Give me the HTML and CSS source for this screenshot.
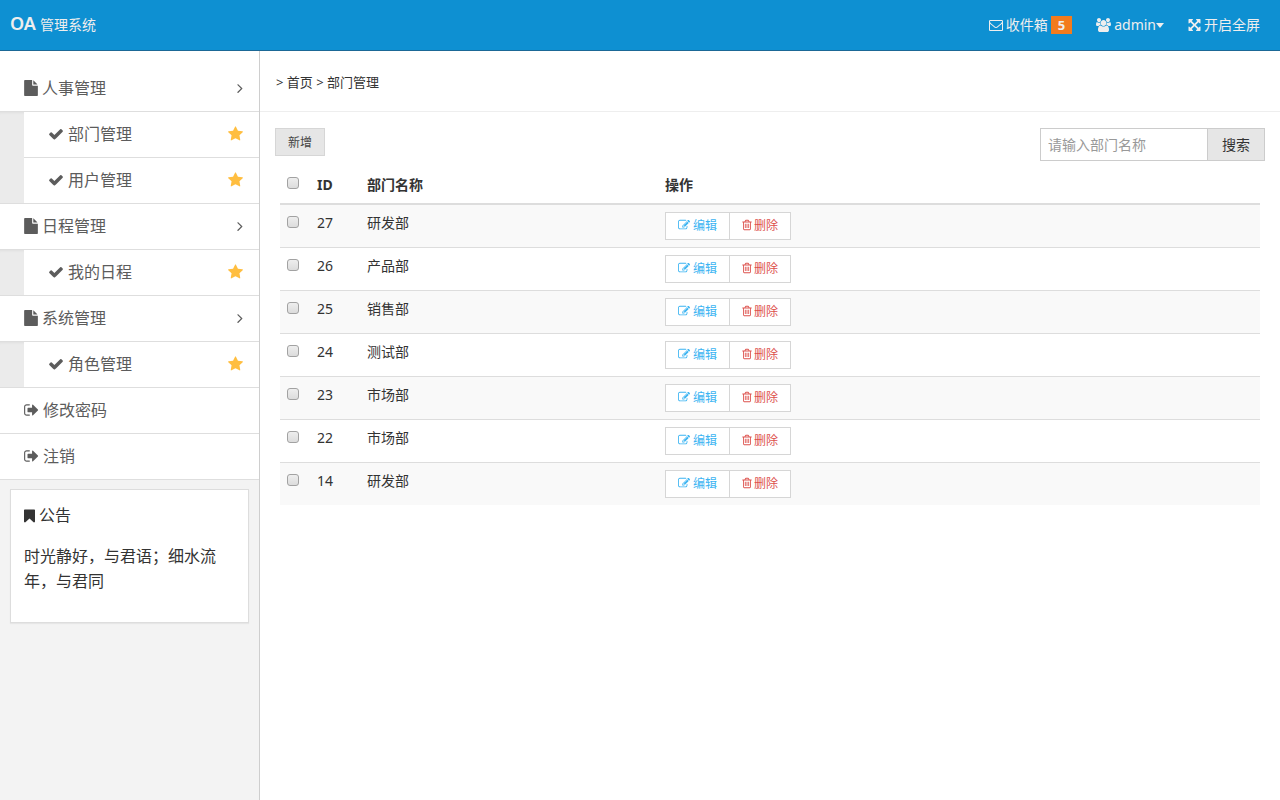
FILE: index.html
```html
<!DOCTYPE html>
<html lang="zh-CN">
<head>
<meta charset="utf-8">
<meta name="viewport" content="width=device-width, initial-scale=1">
<title>OA 管理系统</title>
<link rel="stylesheet" href="styles.css">
</head>
<body>
<svg class="sprite" aria-hidden="true">
  <symbol id="file" viewBox="128 0 1536 1792"><path d="M1152 512v-472q22 14 36 28l408 408q14 14 28 36h-472zm-128 32q0 40 28 68t68 28h544v1056q0 40-28 68t-68 28h-1344q-40 0-68-28t-28-68v-1600q0-40 28-68t68-28h800v544z"/></symbol>
  <symbol id="check" viewBox="0 0 1792 1792"><path d="M1671 566q0 40-28 68l-724 724-136 136q-28 28-68 28t-68-28l-136-136-362-362q-28-28-28-68t28-68l136-136q28-28 68-28t68 28l294 295 656-657q28-28 68-28t68 28l136 136q28 28 28 68z"/></symbol>
  <symbol id="star" viewBox="64 0 1664 1792"><path d="M1728 647q0 22-26 48l-363 354 86 500q1 7 1 20 0 21-10.500 35.500t-30.500 14.500q-19 0-40-12l-449-236-449 236q-22 12-40 12-21 0-31.500-14.500t-10.500-35.500q0-6 2-20l86-500-364-354q-25-27-25-48 0-37 56-46l502-73 225-455q19-41 49-41t49 41l225 455 502 73q56 9 56 46z"/></symbol>
  <symbol id="angle" viewBox="576 0 640 1792"><path d="M1171 960q0 13-10 23l-466 466q-10 10-23 10t-23-10l-50-50q-10-10-10-23t10-23l393-393-393-393q-10-10-10-23t10-23l50-50q10-10 23-10t23 10l466 466q10 10 10 23z"/></symbol>
  <symbol id="signout" viewBox="64 0 1664 1792"><path d="M704 1440q0 4 1 20t.5 26.500-3 23.500-10 19.500-20.500 6.500h-320q-119 0-203.500-84.500t-84.500-203.500v-704q0-119 84.500-203.500t203.500-84.500h320q13 0 22.500 9.500t9.500 22.500q0 4 1 20t.5 26.500-3 23.500-10 19.500-20.500 6.500h-320q-66 0-113 47t-47 113v704q0 66 47 113t113 47h312l11.500 1 11.500 3 8 5.500 7 9 2 13.500zm928-544q0 26-19 45l-544 544q-19 19-45 19t-45-19-19-45v-288h-448q-26 0-45-19t-19-45v-384q0-26 19-45t45-19h448v-288q0-26 19-45t45-19 45 19l544 544q19 19 19 45z"/></symbol>
  <symbol id="bookmark" viewBox="256 0 1280 1792"><path d="M1420 128q23 0 44 9 33 13 52.500 41t19.500 62v1289q0 34-19.500 62t-52.500 41q-19 8-44 8-48 0-83-32l-441-424-441 424q-36 33-83 33-23 0-44-9-33-13-52.500-41t-19.500-62v-1289q0-34 19.500-62t52.500-41q21-9 44-9h1048z"/></symbol>
  <symbol id="envelope" viewBox="0 0 1792 1792"><path d="M1664 1504v-768q-32 36-69 66-268 206-426 338-51 43-83 67t-86.500 48.500-102.500 24.500h-2q-48 0-102.500-24.500t-86.500-48.500-83-67q-158-132-426-338-37-30-69-66v768q0 13 9.500 22.500t22.500 9.500h1472q13 0 22.500-9.500t9.500-22.500zm0-1051v-24.500l-.5-13-3-12.500-5.500-9-9-7.500-14-2.500h-1472q-13 0-22.500 9.500t-9.500 22.500q0 168 147 284 193 152 401 317 6 5 35 29.500t46 37.500 44.500 31.500 50.500 27.500 43 9h2q20 0 43-9t50.500-27.500 44.500-31.500 46-37.500 35-29.500q208-165 401-317 54-43 100.500-115.500t46.500-131.500zm128-37v1088q0 66-47 113t-113 47h-1472q-66 0-113-47t-47-113v-1088q0-66 47-113t113-47h1472q66 0 113 47t47 113z"/></symbol>
  <symbol id="users" viewBox="-64 0 1920 1792"><path d="M529 896q-162 5-265 128h-134q-82 0-138-40.500t-56-118.500q0-353 124-353 6 0 43.500 21t97.500 42.500 119 21.500q67 0 133-23-5 37-5 66 0 139 81 256zm1071 637q0 120-73 189.500t-194 69.500h-874q-121 0-194-69.500t-73-189.500q0-53 3.500-103.500t14-109 26.500-108.500 43-97.500 62-81 85.500-53.500 111.500-20q10 0 43 21.500t73 48 107 48 135 21.500 135-21.500 107-48 73-48 43-21.500q61 0 111.500 20t85.500 53.500 62 81 43 97.500 26.500 108.500 14 109 3.500 103.500zm-1024-1277q0 106-75 181t-181 75-181-75-75-181 75-181 181-75 181 75 75 181zm704 384q0 159-112.500 271.500t-271.500 112.500-271.500-112.500-112.500-271.500 112.500-271.500 271.500-112.500 271.500 112.500 112.500 271.500zm576 225q0 78-56 118.500t-138 40.500h-134q-103-123-265-128 81-117 81-256 0-29-5-66 66 23 133 23 59 0 119-21.500t97.500-42.500 43.500-21q124 0 124 353zm-128-609q0 106-75 181t-181 75-181-75-75-181 75-181 181-75 181 75 75 181z"/></symbol>
  <symbol id="arrows" viewBox="128 0 1536 1792"><path d="M1411 541l-355 355 355 355 144-144q29-31 70-14 39 17 39 59v448q0 26-19 45t-45 19h-448q-42 0-59-40-17-39 14-69l144-144-355-355-355 355 144 144q31 30 14 69-17 40-59 40h-448q-26 0-45-19t-19-45v-448q0-42 40-59 39-17 69 14l144 144 355-355-355-355-144 144q-19 19-45 19-12 0-24-5-40-17-40-59v-448q0-26 19-45t45-19h448q42 0 59 40 17 39-14 69l-144 144 355 355 355-355-144-144q-31-30-14-69 17-40 59-40h448q26 0 45 19t19 45v448q0 42-39 59-13 5-25 5-26 0-45-19z"/></symbol>
  <symbol id="edit" viewBox="0 0 1792 1792"><path d="M888 1184l116-116-152-152-116 116v56h96v96h56zm440-720q-16-16-33 1l-350 350q-17 17-1 33t33-1l350-350q17-17 1-33zm80 594v190q0 119-84.500 203.500t-203.500 84.500h-832q-119 0-203.500-84.500t-84.500-203.500v-832q0-119 84.500-203.500t203.500-84.500h832q63 0 117 25 15 7 18 23 3 17-9 29l-49 49q-14 14-32 8-23-6-45-6h-832q-66 0-113 47t-47 113v832q0 66 47 113t113 47h832q66 0 113-47t47-113v-126q0-13 9-22l64-64q15-15 35-7t20 29zm-96-738l288 288-672 672h-288v-288zm444 132l-92 92-288-288 92-92q28-28 68-28t68 28l152 152q28 28 28 68t-28 68z"/></symbol>
  <symbol id="trash" viewBox="192 0 1408 1792"><path d="M704 736v576q0 14-9 23t-23 9h-64q-14 0-23-9t-9-23v-576q0-14 9-23t23-9h64q14 0 23 9t9 23zm256 0v576q0 14-9 23t-23 9h-64q-14 0-23-9t-9-23v-576q0-14 9-23t23-9h64q14 0 23 9t9 23zm256 0v576q0 14-9 23t-23 9h-64q-14 0-23-9t-9-23v-576q0-14 9-23t23-9h64q14 0 23 9t9 23zm128 724v-948h-896v948q0 22 7 40.500t14.500 27 10.500 8.500h832q3 0 10.500-8.500t14.500-27 7-40.500zm-672-1076h448l-48-117q-7-9-17-11h-317q-10 2-17 11zm928 32v64q0 14-9 23t-23 9h-96v948q0 83-47 143.500t-113 60.500h-832q-66 0-113-58.500t-47-141.500v-952h-96q-14 0-23-9t-9-23v-64q0-14 9-23t23-9h309l70-167q15-37 54-63t79-26h320q40 0 79 26t54 63l70 167h309q14 0 23 9t9 23z"/></symbol>
</svg>

<header class="topbar">
  <div class="brand"><strong>OA</strong><small>管理系统</small></div>
  <nav class="topnav">
    <a href="#"><svg class="icon i14"><use href="#envelope"/></svg><span>收件箱</span><span class="badge">5</span></a>
    <a href="#"><svg class="icon i15"><use href="#users"/></svg><span class="user">admin</span></a>
    <a href="#"><svg class="icon i13"><use href="#arrows"/></svg><span>开启全屏</span></a>
  </nav>
</header>

<div class="layout">
  <aside class="sidebar">
    <ul class="menu">
      <li><a href="#"><svg class="icon file"><use href="#file"/></svg>人事管理<svg class="icon angle"><use href="#angle"/></svg></a>
        <ul class="submenu">
          <li><a href="#"><svg class="icon"><use href="#check"/></svg>部门管理<svg class="icon star"><use href="#star"/></svg></a></li>
          <li><a href="#"><svg class="icon"><use href="#check"/></svg>用户管理<svg class="icon star"><use href="#star"/></svg></a></li>
        </ul>
      </li>
      <li><a href="#"><svg class="icon file"><use href="#file"/></svg>日程管理<svg class="icon angle"><use href="#angle"/></svg></a>
        <ul class="submenu">
          <li><a href="#"><svg class="icon"><use href="#check"/></svg>我的日程<svg class="icon star"><use href="#star"/></svg></a></li>
        </ul>
      </li>
      <li><a href="#"><svg class="icon file"><use href="#file"/></svg>系统管理<svg class="icon angle"><use href="#angle"/></svg></a>
        <ul class="submenu">
          <li><a href="#"><svg class="icon"><use href="#check"/></svg>角色管理<svg class="icon star"><use href="#star"/></svg></a></li>
        </ul>
      </li>
      <li><a href="#"><svg class="icon signout"><use href="#signout"/></svg>修改密码</a></li>
      <li><a href="#"><svg class="icon signout"><use href="#signout"/></svg>注销</a></li>
    </ul>
    <section class="notice">
      <h2><svg class="icon bookmark"><use href="#bookmark"/></svg>公告</h2>
      <p>时光静好，与君语；细水流年，与君同</p>
    </section>
  </aside>

  <main class="content">
    <div class="crumbs">&gt; <a href="#">首页</a> &gt; <a href="#">部门管理</a></div>
    <div class="toolbar">
      <button type="button" class="btn">新增</button>
      <form class="search">
        <input type="text" placeholder="请输入部门名称" aria-label="部门名称">
        <button type="button">搜索</button>
      </form>
    </div>
    <div class="table-wrap">
      <table>
        <colgroup><col class="c-check"><col class="c-id"><col class="c-name"><col></colgroup>
        <thead>
          <tr><th><input type="checkbox" aria-label="全选"></th><th>ID</th><th>部门名称</th><th>操作</th></tr>
        </thead>
        <tbody>
          <tr><td><input type="checkbox" aria-label="27"></td><td>27</td><td>研发部</td><td><div class="group"><button type="button" class="edit"><svg class="icon i12"><use href="#edit"/></svg>编辑</button><button type="button" class="del"><svg class="icon trash"><use href="#trash"/></svg>删除</button></div></td></tr>
          <tr><td><input type="checkbox" aria-label="26"></td><td>26</td><td>产品部</td><td><div class="group"><button type="button" class="edit"><svg class="icon i12"><use href="#edit"/></svg>编辑</button><button type="button" class="del"><svg class="icon trash"><use href="#trash"/></svg>删除</button></div></td></tr>
          <tr><td><input type="checkbox" aria-label="25"></td><td>25</td><td>销售部</td><td><div class="group"><button type="button" class="edit"><svg class="icon i12"><use href="#edit"/></svg>编辑</button><button type="button" class="del"><svg class="icon trash"><use href="#trash"/></svg>删除</button></div></td></tr>
          <tr><td><input type="checkbox" aria-label="24"></td><td>24</td><td>测试部</td><td><div class="group"><button type="button" class="edit"><svg class="icon i12"><use href="#edit"/></svg>编辑</button><button type="button" class="del"><svg class="icon trash"><use href="#trash"/></svg>删除</button></div></td></tr>
          <tr><td><input type="checkbox" aria-label="23"></td><td>23</td><td>市场部</td><td><div class="group"><button type="button" class="edit"><svg class="icon i12"><use href="#edit"/></svg>编辑</button><button type="button" class="del"><svg class="icon trash"><use href="#trash"/></svg>删除</button></div></td></tr>
          <tr><td><input type="checkbox" aria-label="22"></td><td>22</td><td>市场部</td><td><div class="group"><button type="button" class="edit"><svg class="icon i12"><use href="#edit"/></svg>编辑</button><button type="button" class="del"><svg class="icon trash"><use href="#trash"/></svg>删除</button></div></td></tr>
          <tr><td><input type="checkbox" aria-label="14"></td><td>14</td><td>研发部</td><td><div class="group"><button type="button" class="edit"><svg class="icon i12"><use href="#edit"/></svg>编辑</button><button type="button" class="del"><svg class="icon trash"><use href="#trash"/></svg>删除</button></div></td></tr>
        </tbody>
      </table>
    </div>
  </main>
</div>
</body>
</html>
```
FILE: styles.css
```css
* { box-sizing: border-box; }

body {
  margin: 0;
  min-height: 100vh;
  display: flex;
  flex-direction: column;
  font-family: "Noto Sans", "Noto Sans CJK SC", sans-serif;
  font-size: 14px;
  line-height: 22px;
  color: #333;
  background: #fff;
}

a { color: inherit; text-decoration: none; }
ul { margin: 0; padding: 0; list-style: none; }
button, input { font-family: inherit; margin: 0; border-radius: 0; }
button { cursor: pointer; }

.sprite { display: none; }
.icon { fill: currentColor; flex: none; width: 16px; height: 16px; }
.i12 { width: 12px; height: 12px; }
.i13 { width: 13px; height: 14px; }
.i14 { width: 14px; height: 14px; }
.i15 { width: 15px; height: 14px; }

/* Top bar */
.topbar {
  display: flex;
  justify-content: space-between;
  align-items: center;
  height: 51px;
  padding: 0 20px 0 10px;
  background: #0e90d2;
  border-bottom: 1px solid #1b6896;
  color: #eee;
}
.brand { display: flex; align-items: baseline; gap: 4px; padding-bottom: 2px; }
.brand strong { font-size: 18px; font-weight: 600; }
.brand small { font-size: 14px; }
.topnav { display: flex; gap: 24px; }
.topnav a { display: flex; align-items: center; gap: 3px; }
.badge {
  padding: 0 7px;
  font-size: 13px;
  font-weight: 700;
  line-height: 18px;
  background: #f37b1d;
}
.user { display: flex; align-items: center; }
.user::after {
  content: "";
  border: 4px solid transparent;
  border-top: 5px solid currentColor;
  border-bottom: 0;
}

/* Sidebar */
.layout { display: flex; flex: 1; }
.sidebar {
  flex: none;
  width: 260px;
  font-size: 16px;
  background: #f3f3f3;
  border-right: 1px solid #cecece;
}
.menu { padding-top: 15px; background: #fff; color: #5c5c5c; }
.menu a {
  display: flex;
  align-items: center;
  gap: 4px;
  height: 46px;
  padding: 0 16px 2px 24px;
  background: #fff;
  border-bottom: 1px solid #dedede;
}
.submenu {
  padding-left: 24px;
  background: #ebebeb;
  box-shadow: inset 0 3px 3px -2px rgba(0, 0, 0, .05);
}
.submenu li:last-child { margin-left: -24px; border-bottom: 1px solid #dedede; padding-left: 24px; }
.submenu li:last-child a { height: 45px; border-bottom: 0; }
.file { width: 14px; }
.signout { width: 15px; }
.angle { width: 6px; margin-left: auto; }
.star { width: 15px; margin-left: auto; color: #ffbe40; }

.notice {
  margin: 9px 10px 10px;
  padding: 13px 13px 12px;
  background: #fff;
  border: 1px solid #ddd;
  box-shadow: 0 1px 1px rgba(0, 0, 0, .05);
}
.notice h2 { display: flex; align-items: center; gap: 4px; margin: 0; font-size: 16px; font-weight: 400; line-height: 25px; }
.notice p { margin: 16px 0; line-height: 25px; }
.bookmark { width: 11px; }

/* Content */
.content { flex: 1; min-width: 0; }
.crumbs { padding: 20px 16px 18px; font-size: 13px; border-bottom: 1px solid #eee; }
.toolbar { display: flex; justify-content: space-between; align-items: flex-start; padding: 16px 15px 0; }
.btn {
  height: 28px;
  padding: 0 12px;
  font-size: 12px;
  color: #444;
  background: #e6e6e6;
  border: 1px solid #d6d6d6;
}
.search { display: flex; height: 33px; }
.search input {
  width: 167px;
  padding: 0 7px;
  font-size: 14px;
  border: 1px solid #ccc;
  border-right: 0;
}
.search input::placeholder { color: #999; }
.search button {
  padding: 0 14px 2px;
  font-size: 14px;
  color: #333;
  background: #e6e6e6;
  border: 1px solid #ccc;
}

.table-wrap { padding: 6px 20px 20px; }
table { width: 100%; table-layout: fixed; border-collapse: separate; border-spacing: 0; }
.c-check { width: 30px; }
.c-id { width: 50px; }
.c-name { width: 298px; }
th, td { padding: 7px; text-align: left; vertical-align: top; border-top: 1px solid #ddd; }
th { border-top: 0; border-bottom: 2px solid #ddd; }
tbody tr:first-child td { border-top: 0; }
tbody tr:nth-child(odd) { background: #f9f9f9; }
th input, td input {
  display: block;
  appearance: none;
  width: 12px;
  height: 12px;
  margin: 4px 0;
  border: 1px solid #a2a2a2;
  border-radius: 3px;
  background: linear-gradient(#eee, #dcdcdc);
}
th input { margin-top: 3px; }

.group { display: flex; }
.group button {
  display: flex;
  align-items: center;
  gap: 3px;
  height: 28px;
  padding: 0 12px 2px;
  font-size: 12px;
  background: #fff;
  border: 1px solid #d6d6d6;
}
.group .edit { color: #3bb4f2; }
.group .del { gap: 2px; margin-left: -1px; color: #dd514c; }
.trash { width: 10px; height: 12px; }
```
